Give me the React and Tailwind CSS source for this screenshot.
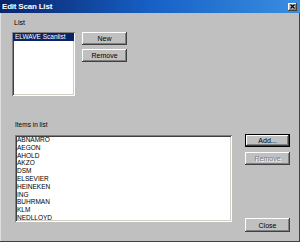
import React from 'react';

const items = ['ABNAMRO', 'AEGON', 'AHOLD', 'AKZO', 'DSM', 'ELSEVIER', 'HEINEKEN', 'ING', 'BUHRMAN', 'KLM', 'NEDLLOYD'];

const raised = 'shadow-[inset_-1px_-1px_0_#404040,inset_1px_1px_0_#ffffff,inset_-2px_-2px_0_#808080]';
const sunken = 'shadow-[inset_1px_1px_0_#808080,inset_-1px_-1px_0_#ffffff,inset_2px_2px_0_#404040,inset_-2px_-2px_0_#d4d0c8]';

const Button = ({ children, isDefault, disabled, className = '' }) => (
    <div className={`${isDefault ? 'border border-black' : ''} ${className}`}>
        <div
            className={`w-full h-full bg-[#c0c0c0] ${raised} flex items-center justify-center text-[7px] leading-none ${disabled ? 'text-[#808080] [text-shadow:1px_1px_0_#ffffff]' : 'text-black'}`}
        >
            {children}
        </div>
    </div>
);

const App = () => {
    return (
        <div
            className="w-[300px] h-[242px] bg-[#c0c0c0] flex flex-col shadow-[inset_-1px_-1px_0_#404040,inset_1px_1px_0_#dfdfdf] overflow-hidden"
            style={{ fontFamily: '"Liberation Sans", Arial, sans-serif' }}
        >
            {/* title bar */}
            <div className="h-[13px] bg-linear-to-r from-[#0a246a] via-[#1660c6] to-[#3a8ee0] flex items-center justify-between pl-[2px] pr-[3px]">
                <span className="text-white font-bold text-[8px] leading-none tracking-[-0.2px]">Edit Scan List</span>
                <div className={`w-[9px] h-[8px] bg-[#c0c0c0] ${raised} flex items-center justify-center`}>
                    <svg width="5" height="5" viewBox="0 0 5 5">
                        <path d="M0.5 0.5 L4.5 4.5 M4.5 0.5 L0.5 4.5" stroke="#000" strokeWidth="1.2" />
                    </svg>
                </div>
            </div>

            <div className="flex flex-col text-black">
                <div className="mt-[6px] ml-[14px] h-[8px] text-[7px] leading-[8px]">List</div>

                <div className="mt-[5px] ml-[12px] flex gap-[7px]">
                    <div className={`w-[63px] h-[64px] bg-white ${sunken} p-[1px]`}>
                        <div className="h-[8px] bg-[#0a246a] text-white text-[6.5px] leading-[8px] pl-[2px] mt-[0px]">
                            ELWAVE Scanlist
                        </div>
                    </div>
                    <div className="flex flex-col gap-[4px]">
                        <Button className="w-[45px] h-[13px]">New</Button>
                        <Button className="w-[45px] h-[13px]">Remove</Button>
                    </div>
                </div>

                <div className="mt-[25px] ml-[15px] h-[8px] text-[6.5px] leading-[8px]">Items in list</div>

                <div className="mt-[6px] ml-[15px] flex">
                    <div className={`w-[217px] h-[87px] bg-white ${sunken} pt-[1px] pl-[2px]`}>
                        {items.map((it) => (
                            <div key={it} className="text-[6.5px] leading-[7.8px] h-[7.8px]">{it}</div>
                        ))}
                    </div>
                    <div className="ml-[13px] -mt-[1px] h-[98px] flex flex-col">
                        <Button isDefault className="w-[45px] h-[13px]">Add...</Button>
                        <Button disabled className="w-[45px] h-[13px] mt-[5px]">Remove</Button>
                        <Button className="w-[45px] h-[14px] mt-auto">Close</Button>
                    </div>
                </div>
            </div>
        </div>
    );
};

export default App;
